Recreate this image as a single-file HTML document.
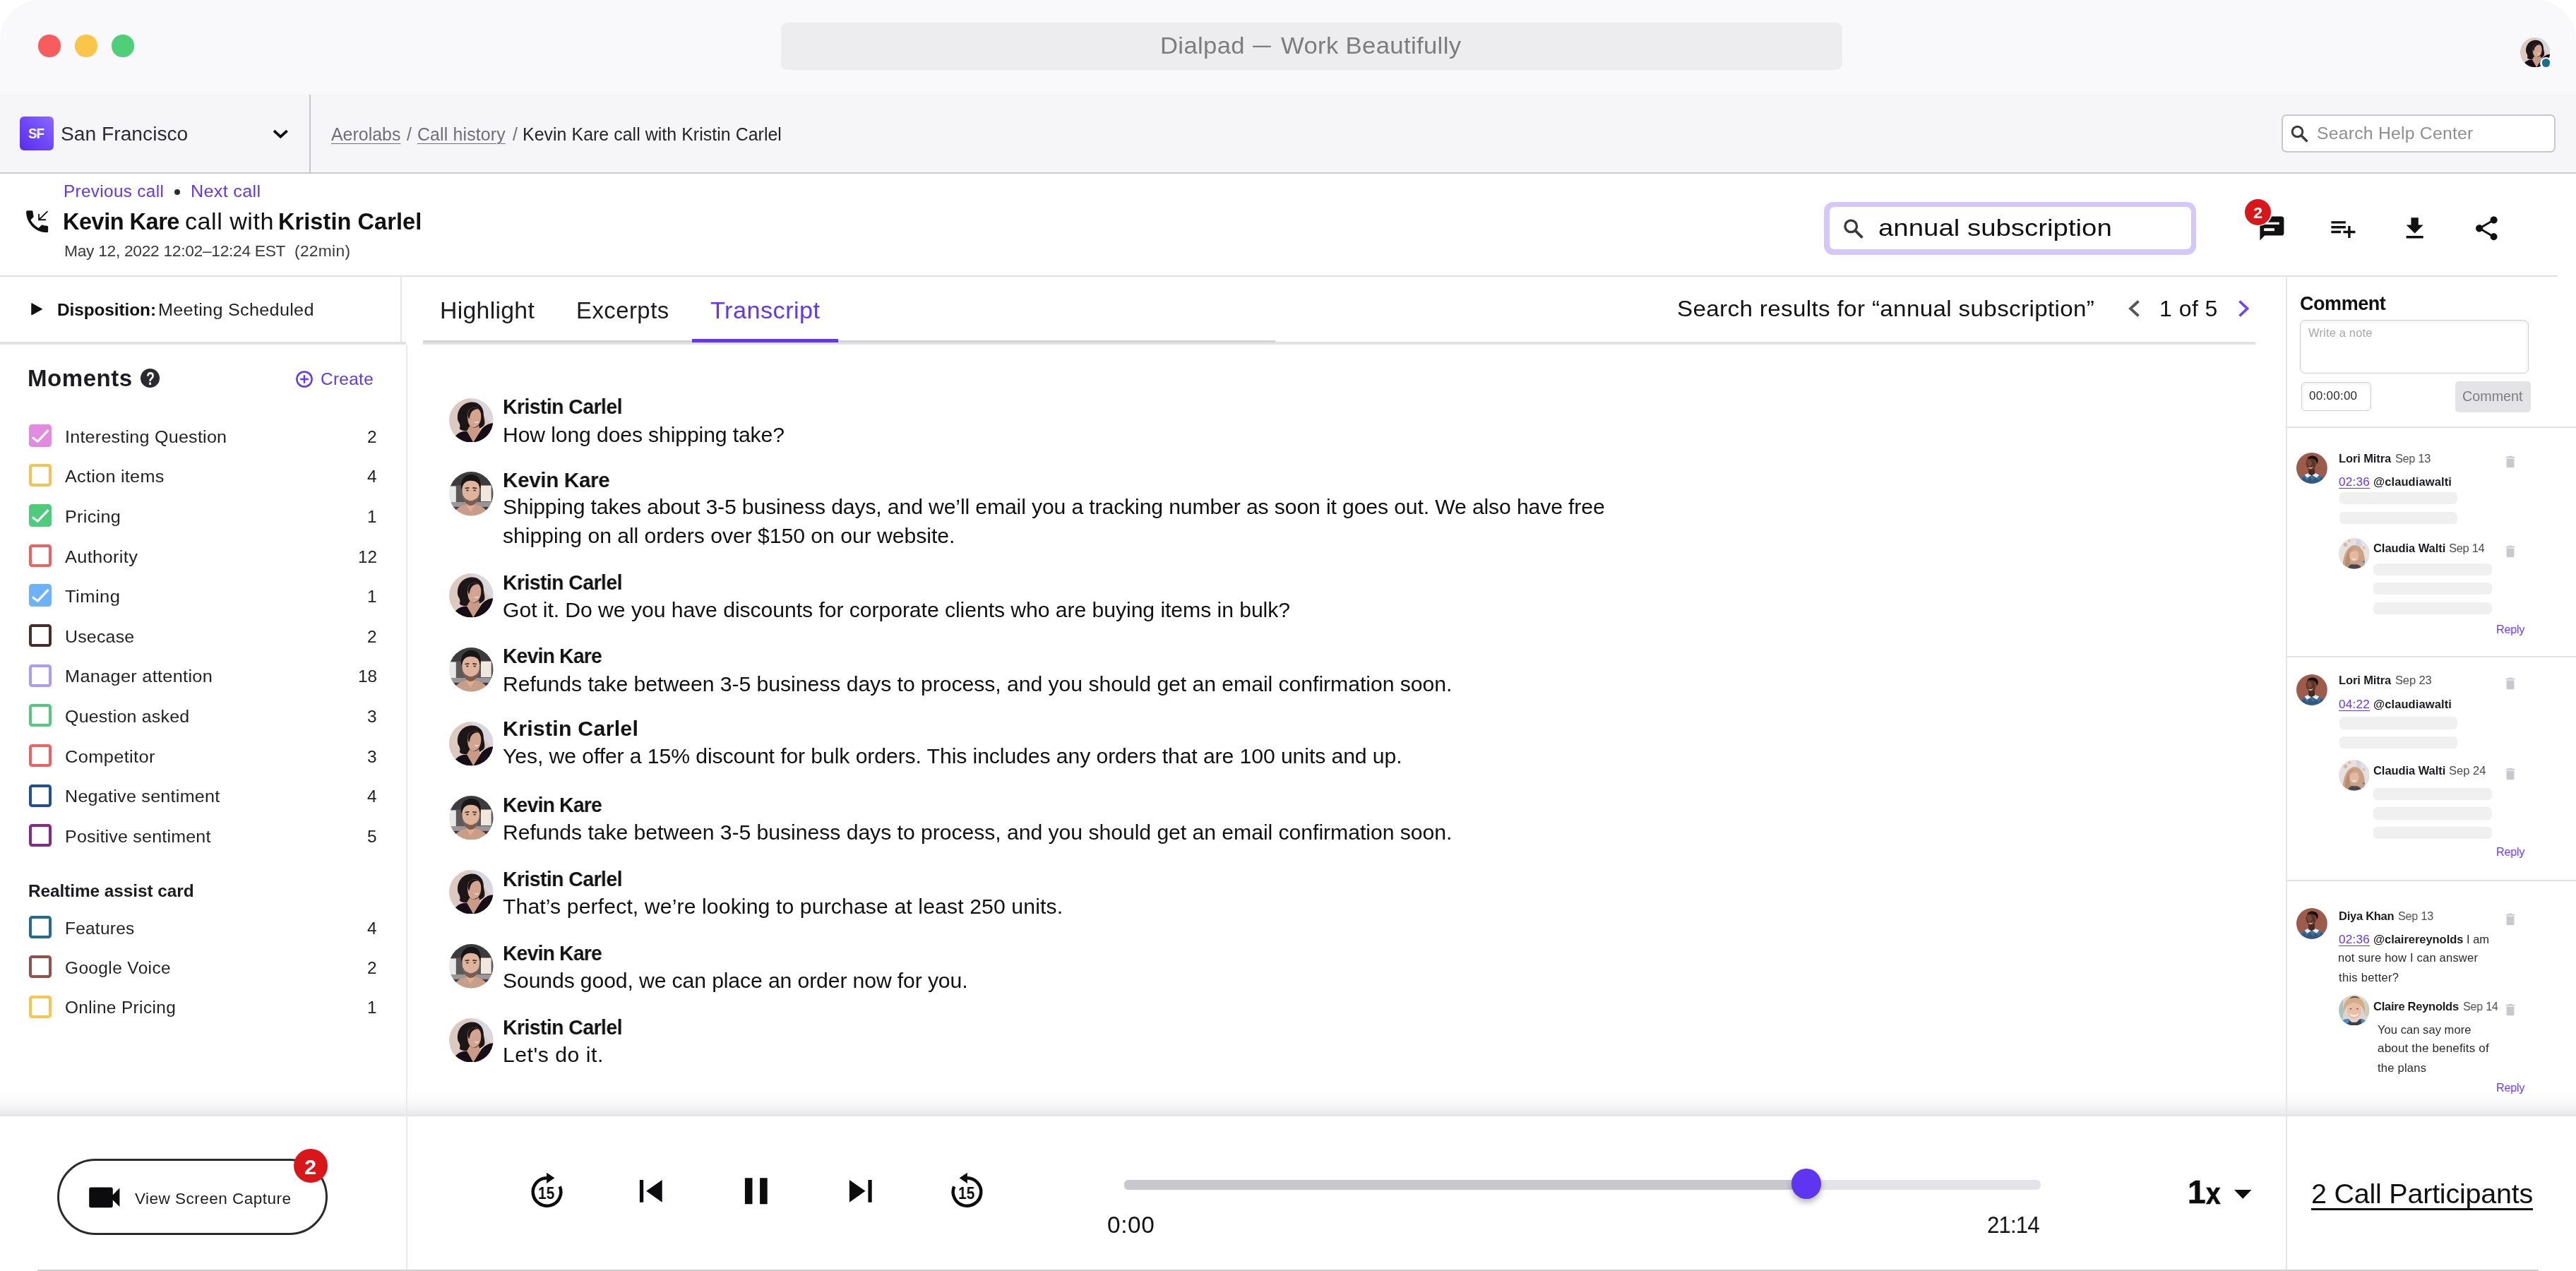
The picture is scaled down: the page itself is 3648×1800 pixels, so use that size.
<!DOCTYPE html>
<html lang="en"><head><meta charset="utf-8"><title>Dialpad — Work Beautifully</title>
<style>
html,body{margin:0;padding:0;background:#fff;width:3648px;height:1800px;}
body{font-family:"Liberation Sans",Arial,sans-serif;position:relative;}
#win{position:absolute;left:0;top:0;width:3648px;height:1800px;overflow:hidden;border-radius:56px;background:#fff;}
#win div,#win svg{position:absolute;}
.t{white-space:pre;will-change:transform;}

</style></head>
<body>
<div id="win">
<div style="left:0.0px;top:0.0px;width:3648.0px;height:134.0px;background:#f9f9fb;"></div>
<div style="left:54.4px;top:49.4px;width:31.2px;height:31.2px;background:#f95c5c;border-radius:50%;"></div>
<div style="left:106.4px;top:49.4px;width:31.2px;height:31.2px;background:#fbc549;border-radius:50%;"></div>
<div style="left:158.4px;top:49.4px;width:31.2px;height:31.2px;background:#50cf79;border-radius:50%;"></div>
<div style="left:1106.0px;top:31.6px;width:1503.0px;height:67.4px;background:#ededef;border-radius:9px;"></div>
<div class="t" style="left:1642.7px;top:43.9px;font-size:33.7px;line-height:40px;color:#7d7d80;letter-spacing:0.34px;transform:scaleX(1.0282);transform-origin:0 50%;">Dialpad</div>
<div class="t" style="left:1773.6px;top:42.1px;font-size:33.7px;line-height:40px;color:#7d7d80;transform:scaleX(0.7706);transform-origin:0 50%;">—</div>
<div class="t" style="left:1813.6px;top:43.9px;font-size:33.7px;line-height:40px;color:#7d7d80;letter-spacing:0.32px;transform:scaleX(1.0301);transform-origin:0 50%;">Work Beautifully</div>
<div style="left:0.0px;top:134.0px;width:3648.0px;height:110.0px;background:#f6f6f8;"></div>
<div style="left:0.0px;top:243.5px;width:3648.0px;height:2.5px;background:#c9c9ce;"></div>
<div style="left:438.4px;top:134.0px;width:1.7px;height:110.0px;background:#c6c6cb;"></div>
<div style="left:27.5px;top:164.8px;width:48.1px;height:48.2px;background:linear-gradient(45deg,#5a2cf0 0%,#6f48f7 50%,#8a6bfc 100%);border-radius:6px;"></div>
<div class="t" style="left:40.2px;top:177.4px;font-size:19.6px;line-height:24px;color:#fff;font-weight:700;letter-spacing:-0.87px;transform:scaleX(0.9505);transform-origin:0 50%;">SF</div>
<div class="t" style="left:86.1px;top:172.2px;font-size:28.2px;line-height:34px;color:#2c2c30;letter-spacing:0.01px;">San Francisco</div>
<svg style="left:383px;top:178px" width="28" height="24" viewBox="0 0 28 24"><path d="M5 7.2 L14.3 15.7 L23.6 7.2" fill="none" stroke="#111" stroke-width="3.8"/></svg>
<div class="t" style="left:468.5px;top:174.8px;font-size:24.9px;line-height:30px;color:#6f6f74;letter-spacing:0.02px;text-decoration:underline;text-decoration-thickness:1.3px;text-underline-offset:4px;">Aerolabs</div>
<div class="t" style="left:575.9px;top:174.8px;font-size:24.9px;line-height:30px;color:#6f6f74;">/</div>
<div class="t" style="left:591.2px;top:174.8px;font-size:24.9px;line-height:30px;color:#6f6f74;letter-spacing:0.14px;text-decoration:underline;text-decoration-thickness:1.3px;text-underline-offset:4px;">Call history</div>
<div class="t" style="left:725.9px;top:174.8px;font-size:24.9px;line-height:30px;color:#6f6f74;">/</div>
<div class="t" style="left:740.4px;top:174.8px;font-size:24.9px;line-height:30px;color:#232326;letter-spacing:0.05px;">Kevin Kare call with Kristin Carlel</div>
<div style="left:3231.2px;top:162.0px;width:387.6px;height:53.7px;background:#fff;border:2px solid #c8c8cc;border-radius:7px;box-sizing:border-box;"></div>
<svg style="left:3243px;top:176px" width="28" height="28" viewBox="0 0 28 28"><circle cx="10.5" cy="10.5" r="7.3" fill="none" stroke="#3a3a3e" stroke-width="3"/><path d="M16 16 L24.5 24.5" stroke="#3a3a3e" stroke-width="3.4"/></svg>
<div class="t" style="left:3280.7px;top:174.0px;font-size:24.8px;line-height:30px;color:#8e8e93;letter-spacing:0.21px;">Search Help Center</div>
<div class="t" style="left:89.6px;top:256.2px;font-size:24.3px;line-height:29px;color:#6236f5;letter-spacing:0.34px;">Previous call</div>
<div style="left:246.8px;top:268.0px;width:8.0px;height:8.0px;background:#2b2b2e;border-radius:50%;"></div>
<div class="t" style="left:270.1px;top:256.2px;font-size:24.3px;line-height:29px;color:#6236f5;letter-spacing:0.28px;transform:scaleX(1.0383);transform-origin:0 50%;">Next call</div>
<svg style="left:31.8px;top:292.8px" width="41.3" height="41.3" viewBox="0 0 24 24"><path fill="#111" d="M6.62 10.79c1.44 2.83 3.76 5.14 6.59 6.59l2.2-2.2c.27-.27.67-.36 1.02-.24 1.12.37 2.33.57 3.57.57.55 0 1 .45 1 1V20c0 .55-.45 1-1 1-9.390 0-17-7.610-17-17 0-.55.45-1 1-1h3.5c.55 0 1 .45 1 1 0 1.250.2 2.450.57 3.570.11.35.03.74-.25 1.020l-2.200 2.200z"/><path d="M20.6 3.6 L13.4 10.6 M13.4 5.8 V10.6 H19.2" fill="none" stroke="#111" stroke-width="1.05"/></svg>
<div class="t" style="left:88.5px;top:294.8px;font-size:32.5px;line-height:39px;color:#111;font-weight:700;letter-spacing:-0.49px;">Kevin Kare</div>
<div class="t" style="left:261.9px;top:294.8px;font-size:32.5px;line-height:39px;color:#111;letter-spacing:0.46px;transform:scaleX(1.0516);transform-origin:0 50%;">call with</div>
<div class="t" style="left:393.6px;top:294.8px;font-size:32.5px;line-height:39px;color:#111;font-weight:700;letter-spacing:0.07px;">Kristin Carlel</div>
<div class="t" style="left:90.6px;top:342.2px;font-size:22.8px;line-height:27px;color:#3c3838;letter-spacing:-0.31px;">May 12, 2022 12:02–12:24 EST</div>
<div class="t" style="left:417.3px;top:342.2px;font-size:22.8px;line-height:27px;color:#3c3838;letter-spacing:0.29px;">(22min)</div>
<div style="left:0.0px;top:390.0px;width:3622.0px;height:2.2px;background:#dfdfe4;"></div>
<div style="left:2583.0px;top:285.6px;width:527.0px;height:75.1px;background:#d5c6fc;border-radius:13px;"></div>
<div style="left:2590.5px;top:293.0px;width:512.5px;height:60.0px;background:#fff;border-radius:7px;"></div>
<svg style="left:2608px;top:307px" width="34" height="34" viewBox="0 0 34 34"><circle cx="13.2" cy="13.4" r="8.3" fill="none" stroke="#3a3a3e" stroke-width="3.3"/><path d="M19.4 19.6 L29.4 29.6" stroke="#3a3a3e" stroke-width="3.8"/></svg>
<div class="t" style="left:2660.4px;top:303.4px;font-size:32.8px;line-height:39px;color:#111;transform:scaleX(1.1706);transform-origin:0 50%;">annual subscription</div>
<svg style="left:3197.3px;top:302.6px" width="40.8" height="40.8" viewBox="0 0 24 24"><path fill="#111" d="M20 2H4c-1.100 0-2 .9-2 2v18l4-4h14c1.100 0 2-.9 2-2V4c0-1.100-.9-2-2-2z"/><rect x="5.4" y="6.9" width="12.7" height="1.9" fill="#fff"/><rect x="5.4" y="11.9" width="8.7" height="2.3" fill="#fff"/></svg>
<div style="left:3177.9px;top:280.6px;width:39.8px;height:39.8px;background:#fff;border-radius:50%;"></div>
<div style="left:3179.4px;top:282.1px;width:36.8px;height:36.8px;background:#d9161a;border-radius:50%;"></div>
<div class="t" style="left:3191.0px;top:288.5px;font-size:21.5px;line-height:26px;color:#fff;font-weight:700;transform:scaleX(1.1000);transform-origin:0 50%;">2</div>
<svg style="left:3298.4px;top:303px" width="40.8" height="40.8" viewBox="0 0 24 24"><path fill="#111" d="M14 10H2v2h12v-2zm0-4H2v2h12V6zm4 8v-4h-2v4h-4v2h4v4h2v-4h4v-2h-4zM2 16h8v-2H2v2z"/></svg>
<svg style="left:3399.4px;top:302.5px" width="41.3" height="41.3" viewBox="0 0 24 24"><path fill="#111" d="M19 9h-4V3H9v6H5l7 7 7-7zM5 18v2h14v-2H5z"/></svg>
<svg style="left:3500.9px;top:302.8px" width="40.8" height="40.8" viewBox="0 0 24 24"><path fill="#111" d="M18 16.080c-.76 0-1.440.3-1.960.77L8.910 12.700c.05-.23.09-.46.09-.7s-.04-.47-.09-.7l7.050-4.110c.54.5 1.250.81 2.040.81 1.660 0 3-1.340 3-3s-1.340-3-3-3-3 1.340-3 3c0 .24.04.47.09.7L8.040 9.810C7.500 9.310 6.790 9 6 9c-1.660 0-3 1.340-3 3s1.340 3 3 3c.79 0 1.500-.31 2.040-.81l7.120 4.160c-.05.21-.08.43-.08.65 0 1.610 1.310 2.920 2.920 2.920 1.610 0 2.920-1.310 2.920-2.920s-1.310-2.920-2.920-2.920z"/></svg>
<div style="left:566.5px;top:392.0px;width:2.1px;height:93.0px;background:#e4e4e9;"></div>
<svg style="left:44.4px;top:429.4px" width="16" height="17.6" viewBox="0 0 16 17.6"><path d="M0.8 0.6 L15.6 8.8 L0.8 17 Z" fill="#111" stroke="#111" stroke-width="1" stroke-linejoin="round"/></svg>
<div class="t" style="left:81.1px;top:424.2px;font-size:24.4px;line-height:29px;color:#111;font-weight:700;letter-spacing:-0.08px;">Disposition:</div>
<div class="t" style="left:223.5px;top:424.2px;font-size:24.4px;line-height:29px;color:#232326;letter-spacing:0.28px;transform:scaleX(1.0335);transform-origin:0 50%;">Meeting Scheduled</div>
<div style="left:0.0px;top:484.3px;width:575.0px;height:3.5px;background:#e1e1e6;"></div>
<div style="left:599.2px;top:484.0px;width:2594.4px;height:3.8px;background:#e1e1e6;"></div>
<div style="left:599.2px;top:482.0px;width:1206.8px;height:3.0px;background:#d3d3d8;"></div>
<div style="left:980.0px;top:480.0px;width:206.8px;height:4.6px;background:#6236f5;"></div>
<div class="t" style="left:623.4px;top:419.5px;font-size:32.9px;line-height:39px;color:#1c1b1f;letter-spacing:0.28px;transform:scaleX(1.0279);transform-origin:0 50%;">Highlight</div>
<div class="t" style="left:815.8px;top:419.5px;font-size:32.9px;line-height:39px;color:#1c1b1f;letter-spacing:0.46px;">Excerpts</div>
<div class="t" style="left:1006.4px;top:419.5px;font-size:32.9px;line-height:39px;color:#6236f5;letter-spacing:0.43px;transform:scaleX(1.0420);transform-origin:0 50%;">Transcript</div>
<div class="t" style="left:2375.4px;top:417.5px;font-size:32px;line-height:38px;color:#111;letter-spacing:0.34px;transform:scaleX(1.0367);transform-origin:0 50%;">Search results for “annual subscription”</div>
<svg style="left:3008px;top:420px" width="30" height="34" viewBox="0 0 30 34"><path d="M20.5 6.5 L9 17 L20.5 27.5" fill="none" stroke="#55555a" stroke-width="3.8"/></svg>
<div class="t" style="left:3058.4px;top:417.5px;font-size:32px;line-height:38px;color:#111;letter-spacing:0.47px;">1 of 5</div>
<svg style="left:3162px;top:420px" width="30" height="34" viewBox="0 0 30 34"><path d="M9.5 6.5 L20.5 17 L9.5 27.5" fill="none" stroke="#6d45f6" stroke-width="3.8"/></svg>
<div style="left:574.5px;top:488.0px;width:2.3px;height:1312.0px;background:#ebebee;"></div>
<div style="left:3236.9px;top:392.0px;width:2.1px;height:1408.0px;background:#e6e6ea;"></div>
<svg style="left:0;top:0" width="0" height="0"><defs><clipPath id="avc"><circle cx="32" cy="32" r="32"/></clipPath><filter id="bl" x="-10%" y="-10%" width="120%" height="120%"><feGaussianBlur stdDeviation="0.7"/></filter></defs></svg>
<svg style="left:3569.0px;top:52.9px" width="42.3" height="42.3" viewBox="0 0 64 64"><g clip-path="url(#avc)"><g filter="url(#bl)"><rect width="64" height="64" fill="#dcc9c1"/><path d="M30 0 H64 V40 C56 30 44 20 30 0 Z" fill="#d9d6dc"/><path d="M13 33 C10 22 16 8 30 6 C42 4 50 12 50 24 C51 32 53 36 50 40 C46 44 40 46 34 46 C26 48 18 48 15 44 C17 40 15 36 13 33 Z" fill="#1a1315"/><path d="M27 22 C28 14 38 11 43 16 C47 20 47 28 45 34 C43 40 38 43 33 42 C28 40 26 32 27 22 Z" fill="#d3a590"/><path d="M27 24 C28 14 36 11 43 16 C38 15 32 17 30 26 C29 32 28 30 27 24 Z" fill="#1a1315"/><path d="M36 33 C38 35 41 35 43 33 C42 37 38 37 36 33 Z" fill="#f3ebe6"/><path d="M30 40 C34 44 40 43 43 39 L45 48 L35 64 L24 50 Z" fill="#c99a86"/><path d="M8 56 C14 48 22 47 26 48 L35 64 L6 64 Z" fill="#121013"/><path d="M64 36 C56 36 48 42 45 48 L35 64 L64 64 Z" fill="#121013"/></g></g></svg>
<div style="left:3597.0px;top:81.0px;width:17.0px;height:17.0px;background:#f9f9fb;border-radius:50%;"></div>
<div style="left:3599.7px;top:83.4px;width:11.8px;height:11.8px;background:#1a6f8f;border-radius:50%;"></div>
<div class="t" style="left:39.3px;top:516.1px;font-size:33.1px;line-height:40px;color:#1c1b1f;font-weight:700;letter-spacing:0.49px;">Moments</div>
<div style="left:198.9px;top:522.2px;width:27.2px;height:26.9px;background:#2b2a2e;border-radius:50%;"></div>
<div class="t" style="left:206.5px;top:520.9px;font-size:25px;line-height:30px;color:#fff;font-weight:700;transform:scaleX(0.7846);transform-origin:0 50%;">?</div>
<svg style="left:417.9px;top:523.6px" width="26" height="26" viewBox="0 0 26 26"><circle cx="13" cy="13" r="10.6" fill="none" stroke="#6236f5" stroke-width="2.5"/><path d="M13 7.2 V18.8 M7.2 13 H18.8" stroke="#6236f5" stroke-width="2.5"/></svg>
<div class="t" style="left:453.8px;top:522.4px;font-size:24.4px;line-height:29px;color:#6236f5;letter-spacing:0.31px;">Create</div>
<div style="left:40.7px;top:600.7px;width:32.1px;height:32.1px;background:#e28be0;border-radius:4.5px;"><svg style="left:0;top:0" width="32" height="32" viewBox="0 0 32 32"><path d="M5 18.4 L12.4 24.2 L27.5 8.2" fill="none" stroke="#fff" stroke-width="3.2"/></svg></div>
<div class="t" style="left:92.1px;top:603.5px;font-size:24.4px;line-height:29px;color:#232326;letter-spacing:0.22px;transform:scaleX(1.0296);transform-origin:0 50%;">Interesting Question</div>
<div class="t" style="right:3114.0px;top:603.5px;font-size:24.4px;line-height:29px;color:#232326;">2</div>
<div style="left:40.7px;top:657.4px;width:32.1px;height:32.1px;border:4.1px solid #f9c14f;border-radius:4.5px;box-sizing:border-box;background:#fff;"></div>
<div class="t" style="left:92.2px;top:660.2px;font-size:24.4px;line-height:29px;color:#232326;letter-spacing:0.26px;transform:scaleX(1.0337);transform-origin:0 50%;">Action items</div>
<div class="t" style="right:3114.0px;top:660.2px;font-size:24.4px;line-height:29px;color:#232326;">4</div>
<div style="left:40.7px;top:714.0px;width:32.1px;height:32.1px;background:#4fcb7c;border-radius:4.5px;"><svg style="left:0;top:0" width="32" height="32" viewBox="0 0 32 32"><path d="M5 18.4 L12.4 24.2 L27.5 8.2" fill="none" stroke="#fff" stroke-width="3.2"/></svg></div>
<div class="t" style="left:92.1px;top:716.8px;font-size:24.4px;line-height:29px;color:#232326;letter-spacing:0.26px;transform:scaleX(1.0339);transform-origin:0 50%;">Pricing</div>
<div class="t" style="right:3114.0px;top:716.8px;font-size:24.4px;line-height:29px;color:#232326;">1</div>
<div style="left:40.7px;top:770.7px;width:32.1px;height:32.1px;border:4.1px solid #f25f5f;border-radius:4.5px;box-sizing:border-box;background:#fff;"></div>
<div class="t" style="left:92.2px;top:773.5px;font-size:24.4px;line-height:29px;color:#232326;letter-spacing:0.32px;transform:scaleX(1.0411);transform-origin:0 50%;">Authority</div>
<div class="t" style="right:3114.0px;top:773.5px;font-size:24.4px;line-height:29px;color:#232326;">12</div>
<div style="left:40.7px;top:827.3px;width:32.1px;height:32.1px;background:#6db3fb;border-radius:4.5px;"><svg style="left:0;top:0" width="32" height="32" viewBox="0 0 32 32"><path d="M5 18.4 L12.4 24.2 L27.5 8.2" fill="none" stroke="#fff" stroke-width="3.2"/></svg></div>
<div class="t" style="left:92.2px;top:830.1px;font-size:24.4px;line-height:29px;color:#232326;letter-spacing:0.43px;transform:scaleX(1.0474);transform-origin:0 50%;">Timing</div>
<div class="t" style="right:3114.0px;top:830.1px;font-size:24.4px;line-height:29px;color:#232326;">1</div>
<div style="left:40.7px;top:884.0px;width:32.1px;height:32.1px;border:4.1px solid #4a2c2c;border-radius:4.5px;box-sizing:border-box;background:#fff;"></div>
<div class="t" style="left:92.2px;top:886.8px;font-size:24.4px;line-height:29px;color:#232326;letter-spacing:0.21px;transform:scaleX(1.0210);transform-origin:0 50%;">Usecase</div>
<div class="t" style="right:3114.0px;top:886.8px;font-size:24.4px;line-height:29px;color:#232326;">2</div>
<div style="left:40.7px;top:940.6px;width:32.1px;height:32.1px;border:4.1px solid #a99bfb;border-radius:4.5px;box-sizing:border-box;background:#fff;"></div>
<div class="t" style="left:92.1px;top:943.4px;font-size:24.4px;line-height:29px;color:#232326;letter-spacing:0.29px;transform:scaleX(1.0375);transform-origin:0 50%;">Manager attention</div>
<div class="t" style="right:3114.0px;top:943.4px;font-size:24.4px;line-height:29px;color:#232326;">18</div>
<div style="left:40.7px;top:997.2px;width:32.1px;height:32.1px;border:4.1px solid #4fcb7c;border-radius:4.5px;box-sizing:border-box;background:#fff;"></div>
<div class="t" style="left:92.2px;top:1000.1px;font-size:24.4px;line-height:29px;color:#232326;letter-spacing:0.20px;transform:scaleX(1.0237);transform-origin:0 50%;">Question asked</div>
<div class="t" style="right:3114.0px;top:1000.1px;font-size:24.4px;line-height:29px;color:#232326;">3</div>
<div style="left:40.7px;top:1053.9px;width:32.1px;height:32.1px;border:4.1px solid #f25f5f;border-radius:4.5px;box-sizing:border-box;background:#fff;"></div>
<div class="t" style="left:92.2px;top:1056.7px;font-size:24.4px;line-height:29px;color:#232326;letter-spacing:0.35px;transform:scaleX(1.0413);transform-origin:0 50%;">Competitor</div>
<div class="t" style="right:3114.0px;top:1056.7px;font-size:24.4px;line-height:29px;color:#232326;">3</div>
<div style="left:40.7px;top:1110.5px;width:32.1px;height:32.1px;border:4.1px solid #1d4f9c;border-radius:4.5px;box-sizing:border-box;background:#fff;"></div>
<div class="t" style="left:92.1px;top:1113.4px;font-size:24.4px;line-height:29px;color:#232326;letter-spacing:0.24px;transform:scaleX(1.0298);transform-origin:0 50%;">Negative sentiment</div>
<div class="t" style="right:3114.0px;top:1113.4px;font-size:24.4px;line-height:29px;color:#232326;">4</div>
<div style="left:40.7px;top:1167.2px;width:32.1px;height:32.1px;border:4.1px solid #8a2688;border-radius:4.5px;box-sizing:border-box;background:#fff;"></div>
<div class="t" style="left:92.1px;top:1170.0px;font-size:24.4px;line-height:29px;color:#232326;letter-spacing:0.19px;transform:scaleX(1.0259);transform-origin:0 50%;">Positive sentiment</div>
<div class="t" style="right:3114.0px;top:1170.0px;font-size:24.4px;line-height:29px;color:#232326;">5</div>
<div class="t" style="left:40.3px;top:1247.3px;font-size:24.4px;line-height:29px;color:#1c1b1f;font-weight:700;letter-spacing:-0.07px;">Realtime assist card</div>
<div style="left:40.7px;top:1297.2px;width:32.1px;height:32.1px;border:4.1px solid #1f6d96;border-radius:4.5px;box-sizing:border-box;background:#fff;"></div>
<div class="t" style="left:92.2px;top:1299.5px;font-size:24.4px;line-height:29px;color:#232326;letter-spacing:0.28px;">Features</div>
<div class="t" style="right:3114.0px;top:1299.5px;font-size:24.4px;line-height:29px;color:#232326;">4</div>
<div style="left:40.7px;top:1353.3px;width:32.1px;height:32.1px;border:4.1px solid #9a4f46;border-radius:4.5px;box-sizing:border-box;background:#fff;"></div>
<div class="t" style="left:92.2px;top:1355.6px;font-size:24.4px;line-height:29px;color:#232326;letter-spacing:0.41px;">Google Voice</div>
<div class="t" style="right:3114.0px;top:1355.6px;font-size:24.4px;line-height:29px;color:#232326;">2</div>
<div style="left:40.7px;top:1409.9px;width:32.1px;height:32.1px;border:4.1px solid #f9c54f;border-radius:4.5px;box-sizing:border-box;background:#fff;"></div>
<div class="t" style="left:92.2px;top:1412.2px;font-size:24.4px;line-height:29px;color:#232326;letter-spacing:0.38px;">Online Pricing</div>
<div class="t" style="right:3114.0px;top:1412.2px;font-size:24.4px;line-height:29px;color:#232326;">1</div>
<svg style="left:636.3px;top:563.8px" width="62.6" height="62.6" viewBox="0 0 64 64"><g clip-path="url(#avc)"><g filter="url(#bl)"><rect width="64" height="64" fill="#dcc9c1"/><path d="M30 0 H64 V40 C56 30 44 20 30 0 Z" fill="#d9d6dc"/><path d="M13 33 C10 22 16 8 30 6 C42 4 50 12 50 24 C51 32 53 36 50 40 C46 44 40 46 34 46 C26 48 18 48 15 44 C17 40 15 36 13 33 Z" fill="#1a1315"/><path d="M27 22 C28 14 38 11 43 16 C47 20 47 28 45 34 C43 40 38 43 33 42 C28 40 26 32 27 22 Z" fill="#d3a590"/><path d="M27 24 C28 14 36 11 43 16 C38 15 32 17 30 26 C29 32 28 30 27 24 Z" fill="#1a1315"/><path d="M36 33 C38 35 41 35 43 33 C42 37 38 37 36 33 Z" fill="#f3ebe6"/><path d="M30 40 C34 44 40 43 43 39 L45 48 L35 64 L24 50 Z" fill="#c99a86"/><path d="M8 56 C14 48 22 47 26 48 L35 64 L6 64 Z" fill="#121013"/><path d="M64 36 C56 36 48 42 45 48 L35 64 L64 64 Z" fill="#121013"/></g></g></svg>
<div class="t" style="left:712.3px;top:557.4px;font-size:30.4px;line-height:36px;color:#111;font-weight:700;letter-spacing:-0.64px;transform:scaleX(0.9370);transform-origin:0 50%;">Kristin Carlel</div>
<div class="t" style="left:712.1px;top:597.7px;font-size:30.2px;line-height:36px;color:#111;letter-spacing:-0.14px;">How long does shipping take?</div>
<svg style="left:636.3px;top:668.3px" width="62.6" height="62.6" viewBox="0 0 64 64"><g clip-path="url(#avc)"><g filter="url(#bl)"><rect width="64" height="64" fill="#3d3b3c"/><rect x="0" y="20" width="64" height="26" fill="#5b5859"/><rect x="0" y="21" width="10" height="24" fill="#e9e8e9"/><rect x="46" y="20" width="15" height="23" fill="#f0e7df"/><rect x="0" y="44" width="64" height="7" fill="#9a9697"/><path d="M6 64 C8 52 20 47 32 47 C44 47 54 52 58 64 Z" fill="#c99e88"/><path d="M24 47 L31 58 L38 47 Z" fill="#dcae96"/><path d="M19 26 C19 14 25 11 31 11 C38 11 44 14 44 26 C44 38 39 48 31 48 C24 48 19 38 19 26 Z" fill="#e0b49c"/><path d="M20 33 C21 44 26 49 31 49 C37 49 42 44 43 33 C41 40 37 41 31 41 C26 41 22 40 20 33 Z" fill="#7b5b4c"/><path d="M27 40 C29 42 34 42 36 40 C35 43 28 43 27 40 Z" fill="#f1e6df"/><path d="M18 26 C15 12 23 4 32 4 C42 4 48 12 45 26 C44 17 40 13 31 13 C24 13 20 17 18 26 Z" fill="#191516"/><path d="M23 24 L29 23.4 M34 23.4 L40 24" stroke="#3a2a26" stroke-width="1.6" fill="none"/><ellipse cx="26.5" cy="27" rx="1.8" ry="1" fill="#3a2a26"/><ellipse cx="37" cy="27" rx="1.8" ry="1" fill="#3a2a26"/></g></g></svg>
<div class="t" style="left:712.3px;top:660.7px;font-size:30.4px;line-height:36px;color:#111;font-weight:700;letter-spacing:-0.32px;transform:scaleX(0.9728);transform-origin:0 50%;">Kevin Kare</div>
<div class="t" style="left:712.1px;top:700.1px;font-size:30.2px;line-height:36px;color:#111;letter-spacing:-0.14px;">Shipping takes about 3-5 business days, and we’ll email you a tracking number as soon it goes out. We also have free</div>
<div class="t" style="left:712.1px;top:740.7px;font-size:30.2px;line-height:36px;color:#111;letter-spacing:-0.05px;">shipping on all orders over $150 on our website.</div>
<svg style="left:636.3px;top:812.0px" width="62.6" height="62.6" viewBox="0 0 64 64"><g clip-path="url(#avc)"><g filter="url(#bl)"><rect width="64" height="64" fill="#dcc9c1"/><path d="M30 0 H64 V40 C56 30 44 20 30 0 Z" fill="#d9d6dc"/><path d="M13 33 C10 22 16 8 30 6 C42 4 50 12 50 24 C51 32 53 36 50 40 C46 44 40 46 34 46 C26 48 18 48 15 44 C17 40 15 36 13 33 Z" fill="#1a1315"/><path d="M27 22 C28 14 38 11 43 16 C47 20 47 28 45 34 C43 40 38 43 33 42 C28 40 26 32 27 22 Z" fill="#d3a590"/><path d="M27 24 C28 14 36 11 43 16 C38 15 32 17 30 26 C29 32 28 30 27 24 Z" fill="#1a1315"/><path d="M36 33 C38 35 41 35 43 33 C42 37 38 37 36 33 Z" fill="#f3ebe6"/><path d="M30 40 C34 44 40 43 43 39 L45 48 L35 64 L24 50 Z" fill="#c99a86"/><path d="M8 56 C14 48 22 47 26 48 L35 64 L6 64 Z" fill="#121013"/><path d="M64 36 C56 36 48 42 45 48 L35 64 L64 64 Z" fill="#121013"/></g></g></svg>
<div class="t" style="left:712.3px;top:805.9px;font-size:30.4px;line-height:36px;color:#111;font-weight:700;letter-spacing:-0.64px;transform:scaleX(0.9370);transform-origin:0 50%;">Kristin Carlel</div>
<div class="t" style="left:712.1px;top:845.7px;font-size:30.2px;line-height:36px;color:#111;letter-spacing:-0.07px;">Got it. Do we you have discounts for corporate clients who are buying items in bulk?</div>
<svg style="left:636.3px;top:917.2px" width="62.6" height="62.6" viewBox="0 0 64 64"><g clip-path="url(#avc)"><g filter="url(#bl)"><rect width="64" height="64" fill="#3d3b3c"/><rect x="0" y="20" width="64" height="26" fill="#5b5859"/><rect x="0" y="21" width="10" height="24" fill="#e9e8e9"/><rect x="46" y="20" width="15" height="23" fill="#f0e7df"/><rect x="0" y="44" width="64" height="7" fill="#9a9697"/><path d="M6 64 C8 52 20 47 32 47 C44 47 54 52 58 64 Z" fill="#c99e88"/><path d="M24 47 L31 58 L38 47 Z" fill="#dcae96"/><path d="M19 26 C19 14 25 11 31 11 C38 11 44 14 44 26 C44 38 39 48 31 48 C24 48 19 38 19 26 Z" fill="#e0b49c"/><path d="M20 33 C21 44 26 49 31 49 C37 49 42 44 43 33 C41 40 37 41 31 41 C26 41 22 40 20 33 Z" fill="#7b5b4c"/><path d="M27 40 C29 42 34 42 36 40 C35 43 28 43 27 40 Z" fill="#f1e6df"/><path d="M18 26 C15 12 23 4 32 4 C42 4 48 12 45 26 C44 17 40 13 31 13 C24 13 20 17 18 26 Z" fill="#191516"/><path d="M23 24 L29 23.4 M34 23.4 L40 24" stroke="#3a2a26" stroke-width="1.6" fill="none"/><ellipse cx="26.5" cy="27" rx="1.8" ry="1" fill="#3a2a26"/><ellipse cx="37" cy="27" rx="1.8" ry="1" fill="#3a2a26"/></g></g></svg>
<div class="t" style="left:712.3px;top:910.3px;font-size:30.4px;line-height:36px;color:#111;font-weight:700;letter-spacing:-0.85px;transform:scaleX(0.9312);transform-origin:0 50%;">Kevin Kare</div>
<div class="t" style="left:712.1px;top:950.7px;font-size:30.2px;line-height:36px;color:#111;letter-spacing:-0.05px;">Refunds take between 3-5 business days to process, and you should get an email confirmation soon.</div>
<svg style="left:636.3px;top:1022.0px" width="62.6" height="62.6" viewBox="0 0 64 64"><g clip-path="url(#avc)"><g filter="url(#bl)"><rect width="64" height="64" fill="#dcc9c1"/><path d="M30 0 H64 V40 C56 30 44 20 30 0 Z" fill="#d9d6dc"/><path d="M13 33 C10 22 16 8 30 6 C42 4 50 12 50 24 C51 32 53 36 50 40 C46 44 40 46 34 46 C26 48 18 48 15 44 C17 40 15 36 13 33 Z" fill="#1a1315"/><path d="M27 22 C28 14 38 11 43 16 C47 20 47 28 45 34 C43 40 38 43 33 42 C28 40 26 32 27 22 Z" fill="#d3a590"/><path d="M27 24 C28 14 36 11 43 16 C38 15 32 17 30 26 C29 32 28 30 27 24 Z" fill="#1a1315"/><path d="M36 33 C38 35 41 35 43 33 C42 37 38 37 36 33 Z" fill="#f3ebe6"/><path d="M30 40 C34 44 40 43 43 39 L45 48 L35 64 L24 50 Z" fill="#c99a86"/><path d="M8 56 C14 48 22 47 26 48 L35 64 L6 64 Z" fill="#121013"/><path d="M64 36 C56 36 48 42 45 48 L35 64 L64 64 Z" fill="#121013"/></g></g></svg>
<div class="t" style="left:712.2px;top:1012.9px;font-size:30.4px;line-height:36px;color:#111;font-weight:700;letter-spacing:0.21px;">Kristin Carlel</div>
<div class="t" style="left:712.1px;top:1053.3px;font-size:30.2px;line-height:36px;color:#111;letter-spacing:-0.10px;">Yes, we offer a 15% discount for bulk orders. This includes any orders that are 100 units and up.</div>
<svg style="left:636.3px;top:1126.8px" width="62.6" height="62.6" viewBox="0 0 64 64"><g clip-path="url(#avc)"><g filter="url(#bl)"><rect width="64" height="64" fill="#3d3b3c"/><rect x="0" y="20" width="64" height="26" fill="#5b5859"/><rect x="0" y="21" width="10" height="24" fill="#e9e8e9"/><rect x="46" y="20" width="15" height="23" fill="#f0e7df"/><rect x="0" y="44" width="64" height="7" fill="#9a9697"/><path d="M6 64 C8 52 20 47 32 47 C44 47 54 52 58 64 Z" fill="#c99e88"/><path d="M24 47 L31 58 L38 47 Z" fill="#dcae96"/><path d="M19 26 C19 14 25 11 31 11 C38 11 44 14 44 26 C44 38 39 48 31 48 C24 48 19 38 19 26 Z" fill="#e0b49c"/><path d="M20 33 C21 44 26 49 31 49 C37 49 42 44 43 33 C41 40 37 41 31 41 C26 41 22 40 20 33 Z" fill="#7b5b4c"/><path d="M27 40 C29 42 34 42 36 40 C35 43 28 43 27 40 Z" fill="#f1e6df"/><path d="M18 26 C15 12 23 4 32 4 C42 4 48 12 45 26 C44 17 40 13 31 13 C24 13 20 17 18 26 Z" fill="#191516"/><path d="M23 24 L29 23.4 M34 23.4 L40 24" stroke="#3a2a26" stroke-width="1.6" fill="none"/><ellipse cx="26.5" cy="27" rx="1.8" ry="1" fill="#3a2a26"/><ellipse cx="37" cy="27" rx="1.8" ry="1" fill="#3a2a26"/></g></g></svg>
<div class="t" style="left:712.3px;top:1120.5px;font-size:30.4px;line-height:36px;color:#111;font-weight:700;letter-spacing:-0.85px;transform:scaleX(0.9312);transform-origin:0 50%;">Kevin Kare</div>
<div class="t" style="left:712.1px;top:1160.5px;font-size:30.2px;line-height:36px;color:#111;letter-spacing:-0.05px;">Refunds take between 3-5 business days to process, and you should get an email confirmation soon.</div>
<svg style="left:636.3px;top:1231.6px" width="62.6" height="62.6" viewBox="0 0 64 64"><g clip-path="url(#avc)"><g filter="url(#bl)"><rect width="64" height="64" fill="#dcc9c1"/><path d="M30 0 H64 V40 C56 30 44 20 30 0 Z" fill="#d9d6dc"/><path d="M13 33 C10 22 16 8 30 6 C42 4 50 12 50 24 C51 32 53 36 50 40 C46 44 40 46 34 46 C26 48 18 48 15 44 C17 40 15 36 13 33 Z" fill="#1a1315"/><path d="M27 22 C28 14 38 11 43 16 C47 20 47 28 45 34 C43 40 38 43 33 42 C28 40 26 32 27 22 Z" fill="#d3a590"/><path d="M27 24 C28 14 36 11 43 16 C38 15 32 17 30 26 C29 32 28 30 27 24 Z" fill="#1a1315"/><path d="M36 33 C38 35 41 35 43 33 C42 37 38 37 36 33 Z" fill="#f3ebe6"/><path d="M30 40 C34 44 40 43 43 39 L45 48 L35 64 L24 50 Z" fill="#c99a86"/><path d="M8 56 C14 48 22 47 26 48 L35 64 L6 64 Z" fill="#121013"/><path d="M64 36 C56 36 48 42 45 48 L35 64 L64 64 Z" fill="#121013"/></g></g></svg>
<div class="t" style="left:712.3px;top:1225.9px;font-size:30.4px;line-height:36px;color:#111;font-weight:700;letter-spacing:-0.64px;transform:scaleX(0.9370);transform-origin:0 50%;">Kristin Carlel</div>
<div class="t" style="left:712.1px;top:1265.8px;font-size:30.2px;line-height:36px;color:#111;letter-spacing:0.11px;">That’s perfect, we’re looking to purchase at least 250 units.</div>
<svg style="left:636.3px;top:1337.0px" width="62.6" height="62.6" viewBox="0 0 64 64"><g clip-path="url(#avc)"><g filter="url(#bl)"><rect width="64" height="64" fill="#3d3b3c"/><rect x="0" y="20" width="64" height="26" fill="#5b5859"/><rect x="0" y="21" width="10" height="24" fill="#e9e8e9"/><rect x="46" y="20" width="15" height="23" fill="#f0e7df"/><rect x="0" y="44" width="64" height="7" fill="#9a9697"/><path d="M6 64 C8 52 20 47 32 47 C44 47 54 52 58 64 Z" fill="#c99e88"/><path d="M24 47 L31 58 L38 47 Z" fill="#dcae96"/><path d="M19 26 C19 14 25 11 31 11 C38 11 44 14 44 26 C44 38 39 48 31 48 C24 48 19 38 19 26 Z" fill="#e0b49c"/><path d="M20 33 C21 44 26 49 31 49 C37 49 42 44 43 33 C41 40 37 41 31 41 C26 41 22 40 20 33 Z" fill="#7b5b4c"/><path d="M27 40 C29 42 34 42 36 40 C35 43 28 43 27 40 Z" fill="#f1e6df"/><path d="M18 26 C15 12 23 4 32 4 C42 4 48 12 45 26 C44 17 40 13 31 13 C24 13 20 17 18 26 Z" fill="#191516"/><path d="M23 24 L29 23.4 M34 23.4 L40 24" stroke="#3a2a26" stroke-width="1.6" fill="none"/><ellipse cx="26.5" cy="27" rx="1.8" ry="1" fill="#3a2a26"/><ellipse cx="37" cy="27" rx="1.8" ry="1" fill="#3a2a26"/></g></g></svg>
<div class="t" style="left:712.3px;top:1330.8px;font-size:30.4px;line-height:36px;color:#111;font-weight:700;letter-spacing:-0.85px;transform:scaleX(0.9312);transform-origin:0 50%;">Kevin Kare</div>
<div class="t" style="left:712.1px;top:1370.9px;font-size:30.2px;line-height:36px;color:#111;letter-spacing:-0.13px;">Sounds good, we can place an order now for you.</div>
<svg style="left:636.3px;top:1441.7px" width="62.6" height="62.6" viewBox="0 0 64 64"><g clip-path="url(#avc)"><g filter="url(#bl)"><rect width="64" height="64" fill="#dcc9c1"/><path d="M30 0 H64 V40 C56 30 44 20 30 0 Z" fill="#d9d6dc"/><path d="M13 33 C10 22 16 8 30 6 C42 4 50 12 50 24 C51 32 53 36 50 40 C46 44 40 46 34 46 C26 48 18 48 15 44 C17 40 15 36 13 33 Z" fill="#1a1315"/><path d="M27 22 C28 14 38 11 43 16 C47 20 47 28 45 34 C43 40 38 43 33 42 C28 40 26 32 27 22 Z" fill="#d3a590"/><path d="M27 24 C28 14 36 11 43 16 C38 15 32 17 30 26 C29 32 28 30 27 24 Z" fill="#1a1315"/><path d="M36 33 C38 35 41 35 43 33 C42 37 38 37 36 33 Z" fill="#f3ebe6"/><path d="M30 40 C34 44 40 43 43 39 L45 48 L35 64 L24 50 Z" fill="#c99a86"/><path d="M8 56 C14 48 22 47 26 48 L35 64 L6 64 Z" fill="#121013"/><path d="M64 36 C56 36 48 42 45 48 L35 64 L64 64 Z" fill="#121013"/></g></g></svg>
<div class="t" style="left:712.3px;top:1435.9px;font-size:30.4px;line-height:36px;color:#111;font-weight:700;letter-spacing:-0.64px;transform:scaleX(0.9370);transform-origin:0 50%;">Kristin Carlel</div>
<div class="t" style="left:712.1px;top:1476.2px;font-size:30.2px;line-height:36px;color:#111;letter-spacing:0.51px;">Let&#x27;s do it.</div>
<div class="t" style="left:3257.2px;top:413.6px;font-size:27px;line-height:32px;color:#111;font-weight:700;letter-spacing:-0.45px;">Comment</div>
<div style="left:3257.2px;top:453.2px;width:323.8px;height:75.6px;background:#fff;border:1.6px solid #cdcdd4;border-radius:7px;box-sizing:border-box;box-shadow:inset 0 2px 4px rgba(0,0,0,.07);"></div>
<div class="t" style="left:3268.5px;top:461.2px;font-size:16.5px;line-height:20px;color:#a6a6ab;letter-spacing:0.16px;">Write a note</div>
<div style="left:3259.0px;top:540.8px;width:98.8px;height:41.7px;background:#fff;border:1.6px solid #cdcdd4;border-radius:6px;box-sizing:border-box;box-shadow:inset 0 2px 4px rgba(0,0,0,.07);"></div>
<div class="t" style="left:3270.4px;top:550.7px;font-size:17px;line-height:20px;color:#2b2b2e;letter-spacing:0.27px;">00:00:00</div>
<div style="left:3476.7px;top:540.0px;width:107.3px;height:44.0px;background:#e4e4e7;border-radius:5px;"></div>
<div class="t" style="left:3486.6px;top:549.1px;font-size:19.8px;line-height:24px;color:#7d7d82;letter-spacing:-0.04px;">Comment</div>
<div style="left:3239.0px;top:603.6px;width:409.0px;height:2.2px;background:#e1e1e6;"></div>
<svg style="left:3251.7px;top:640.7px" width="43.9" height="43.9" viewBox="0 0 64 64"><g clip-path="url(#avc)"><g filter="url(#bl)"><rect width="64" height="64" fill="#9d5c4b"/><path d="M2 64 C4 50 16 45 32 45 C48 45 60 50 62 64 Z" fill="#3f6f98"/><path d="M10 56 L16 50 L22 58 L28 50 L34 58 L40 50 L46 58 L52 50 L56 58 L56 64 L10 64 Z" fill="#2b4f73" opacity=".7"/><path d="M17 46 L31 39 L47 46 L42 52 L32 46 L22 52 Z" fill="#eeeeee"/><path d="M25 34 L38 34 L38 44 L31 47 L25 44 Z" fill="#4a2a20"/><ellipse cx="30" cy="23" rx="10" ry="13" fill="#5b3527" transform="rotate(-10 30 23)"/><ellipse cx="27" cy="21" rx="5" ry="7" fill="#7a4a38" transform="rotate(-10 27 21)"/><path d="M22 14 C24 5 38 4 43 11 C46 15 45 21 42 24 C42 16 36 11 28 12 C25 12 23 13 22 14 Z" fill="#120d0c"/><path d="M24 29 C27 32 32 32 35 28 C33 34 27 35 24 29 Z" fill="#f0e6e0"/></g></g></svg>
<div class="t" style="left:3311.5px;top:638.8px;font-size:16.5px;line-height:20px;color:#1c1b1f;font-weight:700;letter-spacing:-0.11px;">Lori Mitra</div>
<div class="t" style="left:3392.2px;top:638.8px;font-size:16.5px;line-height:20px;color:#4a4a4f;letter-spacing:-0.17px;transform:scaleX(0.9768);transform-origin:0 50%;">Sep 13</div>
<svg style="left:3544.4px;top:642.5px" width="22" height="22" viewBox="0 0 24 24"><path fill="#c8c8ce" d="M6 19c0 1.100.9 2 2 2h8c1.100 0 2-.9 2-2V7H6v12zM19 4h-3.500l-1-1h-5l-1 1H5v2h14V4z"/></svg>
<div class="t" style="left:3312.3px;top:672.4px;font-size:16.5px;line-height:20px;color:#6236f5;letter-spacing:0.25px;transform:scaleX(1.0377);transform-origin:0 50%;text-decoration:underline;text-decoration-thickness:1.3px;text-underline-offset:3px;">02:36</div>
<div class="t" style="left:3361.3px;top:672.4px;font-size:16.5px;line-height:20px;color:#1c1b1f;font-weight:700;letter-spacing:0.10px;">@claudiawalti</div>
<div style="left:3312.6px;top:697.3px;width:167.4px;height:17.2px;background:#f0f0f1;border-radius:6px;"></div>
<div style="left:3312.6px;top:725.0px;width:167.4px;height:17.2px;background:#f0f0f1;border-radius:6px;"></div>
<svg style="left:3311.7px;top:762.0px" width="43.7" height="43.7" viewBox="0 0 64 64"><g clip-path="url(#avc)"><g filter="url(#bl)"><rect width="64" height="64" fill="#e6e0df"/><rect x="36" y="0" width="10" height="30" fill="#d2d5dc"/><circle cx="14" cy="14" r="4" fill="#d5b9a8"/><circle cx="52" cy="20" r="3" fill="#d9c0b0"/><circle cx="22" cy="6" r="3" fill="#d9bfae"/><path d="M8 64 C8 44 14 18 31 15 C46 14 54 30 54 46 C55 54 52 60 50 64 Z" fill="#c9a184"/><path d="M14 60 C12 44 18 24 30 20 C24 30 22 46 24 62 Z" fill="#b78d70"/><ellipse cx="32" cy="36" rx="10" ry="12.5" fill="#e5b89f"/><path d="M21 33 C23 21 40 18 45 30 C38 25 30 25 21 33 Z" fill="#cfa888"/><path d="M26 41 C29 44 35 44 38 41 C36 47 28 47 26 41 Z" fill="#f6eeea"/><path d="M18 64 C22 54 28 53 32 55 C38 53 46 56 48 64 Z" fill="#47464d"/><circle cx="52" cy="49" r="2.5" fill="#4a90d9"/></g></g></svg>
<div class="t" style="left:3361.0px;top:766.3px;font-size:16.5px;line-height:20px;color:#1c1b1f;font-weight:700;letter-spacing:-0.06px;">Claudia Walti</div>
<div class="t" style="left:3468.3px;top:766.3px;font-size:16.5px;line-height:20px;color:#4a4a4f;letter-spacing:-0.32px;">Sep 14</div>
<svg style="left:3544.4px;top:770.2px" width="22" height="22" viewBox="0 0 24 24"><path fill="#c8c8ce" d="M6 19c0 1.100.9 2 2 2h8c1.100 0 2-.9 2-2V7H6v12zM19 4h-3.500l-1-1h-5l-1 1H5v2h14V4z"/></svg>
<div style="left:3361.0px;top:797.5px;width:167.8px;height:17.2px;background:#f0f0f1;border-radius:6px;"></div>
<div style="left:3361.0px;top:825.3px;width:167.8px;height:17.2px;background:#f0f0f1;border-radius:6px;"></div>
<div style="left:3361.0px;top:853.1px;width:167.8px;height:17.2px;background:#f0f0f1;border-radius:6px;"></div>
<div class="t" style="left:3534.6px;top:881.2px;font-size:16.5px;line-height:20px;color:#6236f5;letter-spacing:-0.19px;transform:scaleX(0.9738);transform-origin:0 50%;">Reply</div>
<div style="left:3239.0px;top:929.3px;width:409.0px;height:2.2px;background:#e1e1e6;"></div>
<svg style="left:3251.7px;top:955.2px" width="43.9" height="43.9" viewBox="0 0 64 64"><g clip-path="url(#avc)"><g filter="url(#bl)"><rect width="64" height="64" fill="#9d5c4b"/><path d="M2 64 C4 50 16 45 32 45 C48 45 60 50 62 64 Z" fill="#3f6f98"/><path d="M10 56 L16 50 L22 58 L28 50 L34 58 L40 50 L46 58 L52 50 L56 58 L56 64 L10 64 Z" fill="#2b4f73" opacity=".7"/><path d="M17 46 L31 39 L47 46 L42 52 L32 46 L22 52 Z" fill="#eeeeee"/><path d="M25 34 L38 34 L38 44 L31 47 L25 44 Z" fill="#4a2a20"/><ellipse cx="30" cy="23" rx="10" ry="13" fill="#5b3527" transform="rotate(-10 30 23)"/><ellipse cx="27" cy="21" rx="5" ry="7" fill="#7a4a38" transform="rotate(-10 27 21)"/><path d="M22 14 C24 5 38 4 43 11 C46 15 45 21 42 24 C42 16 36 11 28 12 C25 12 23 13 22 14 Z" fill="#120d0c"/><path d="M24 29 C27 32 32 32 35 28 C33 34 27 35 24 29 Z" fill="#f0e6e0"/></g></g></svg>
<div class="t" style="left:3311.5px;top:953.3px;font-size:16.5px;line-height:20px;color:#1c1b1f;font-weight:700;letter-spacing:-0.11px;">Lori Mitra</div>
<div class="t" style="left:3392.2px;top:953.3px;font-size:16.5px;line-height:20px;color:#4a4a4f;letter-spacing:-0.14px;">Sep 23</div>
<svg style="left:3544.4px;top:957.0px" width="22" height="22" viewBox="0 0 24 24"><path fill="#c8c8ce" d="M6 19c0 1.100.9 2 2 2h8c1.100 0 2-.9 2-2V7H6v12zM19 4h-3.500l-1-1h-5l-1 1H5v2h14V4z"/></svg>
<div class="t" style="left:3312.3px;top:986.9px;font-size:16.5px;line-height:20px;color:#6236f5;letter-spacing:0.25px;transform:scaleX(1.0377);transform-origin:0 50%;text-decoration:underline;text-decoration-thickness:1.3px;text-underline-offset:3px;">04:22</div>
<div class="t" style="left:3361.3px;top:986.9px;font-size:16.5px;line-height:20px;color:#1c1b1f;font-weight:700;letter-spacing:0.10px;">@claudiawalti</div>
<div style="left:3312.6px;top:1015.4px;width:167.4px;height:17.2px;background:#f0f0f1;border-radius:6px;"></div>
<div style="left:3312.6px;top:1043.3px;width:167.4px;height:17.2px;background:#f0f0f1;border-radius:6px;"></div>
<svg style="left:3311.7px;top:1076.4px" width="43.7" height="43.7" viewBox="0 0 64 64"><g clip-path="url(#avc)"><g filter="url(#bl)"><rect width="64" height="64" fill="#e6e0df"/><rect x="36" y="0" width="10" height="30" fill="#d2d5dc"/><circle cx="14" cy="14" r="4" fill="#d5b9a8"/><circle cx="52" cy="20" r="3" fill="#d9c0b0"/><circle cx="22" cy="6" r="3" fill="#d9bfae"/><path d="M8 64 C8 44 14 18 31 15 C46 14 54 30 54 46 C55 54 52 60 50 64 Z" fill="#c9a184"/><path d="M14 60 C12 44 18 24 30 20 C24 30 22 46 24 62 Z" fill="#b78d70"/><ellipse cx="32" cy="36" rx="10" ry="12.5" fill="#e5b89f"/><path d="M21 33 C23 21 40 18 45 30 C38 25 30 25 21 33 Z" fill="#cfa888"/><path d="M26 41 C29 44 35 44 38 41 C36 47 28 47 26 41 Z" fill="#f6eeea"/><path d="M18 64 C22 54 28 53 32 55 C38 53 46 56 48 64 Z" fill="#47464d"/><circle cx="52" cy="49" r="2.5" fill="#4a90d9"/></g></g></svg>
<div class="t" style="left:3361.0px;top:1080.7px;font-size:16.5px;line-height:20px;color:#1c1b1f;font-weight:700;letter-spacing:-0.06px;">Claudia Walti</div>
<div class="t" style="left:3468.3px;top:1080.7px;font-size:16.5px;line-height:20px;color:#4a4a4f;letter-spacing:0.02px;">Sep 24</div>
<svg style="left:3544.4px;top:1084.6px" width="22" height="22" viewBox="0 0 24 24"><path fill="#c8c8ce" d="M6 19c0 1.100.9 2 2 2h8c1.100 0 2-.9 2-2V7H6v12zM19 4h-3.500l-1-1h-5l-1 1H5v2h14V4z"/></svg>
<div style="left:3361.0px;top:1115.6px;width:167.8px;height:17.2px;background:#f0f0f1;border-radius:6px;"></div>
<div style="left:3361.0px;top:1143.4px;width:167.8px;height:17.2px;background:#f0f0f1;border-radius:6px;"></div>
<div style="left:3361.0px;top:1171.2px;width:167.8px;height:17.2px;background:#f0f0f1;border-radius:6px;"></div>
<div class="t" style="left:3534.6px;top:1196.2px;font-size:16.5px;line-height:20px;color:#6236f5;letter-spacing:-0.19px;transform:scaleX(0.9738);transform-origin:0 50%;">Reply</div>
<div style="left:3239.0px;top:1245.6px;width:409.0px;height:2.2px;background:#e1e1e6;"></div>
<svg style="left:3251.7px;top:1285.7px" width="43.9" height="43.9" viewBox="0 0 64 64"><g clip-path="url(#avc)"><g filter="url(#bl)"><rect width="64" height="64" fill="#9d5c4b"/><path d="M2 64 C4 50 16 45 32 45 C48 45 60 50 62 64 Z" fill="#3f6f98"/><path d="M10 56 L16 50 L22 58 L28 50 L34 58 L40 50 L46 58 L52 50 L56 58 L56 64 L10 64 Z" fill="#2b4f73" opacity=".7"/><path d="M17 46 L31 39 L47 46 L42 52 L32 46 L22 52 Z" fill="#eeeeee"/><path d="M25 34 L38 34 L38 44 L31 47 L25 44 Z" fill="#4a2a20"/><ellipse cx="30" cy="23" rx="10" ry="13" fill="#5b3527" transform="rotate(-10 30 23)"/><ellipse cx="27" cy="21" rx="5" ry="7" fill="#7a4a38" transform="rotate(-10 27 21)"/><path d="M22 14 C24 5 38 4 43 11 C46 15 45 21 42 24 C42 16 36 11 28 12 C25 12 23 13 22 14 Z" fill="#120d0c"/><path d="M24 29 C27 32 32 32 35 28 C33 34 27 35 24 29 Z" fill="#f0e6e0"/></g></g></svg>
<div class="t" style="left:3311.5px;top:1286.6px;font-size:16.5px;line-height:20px;color:#1c1b1f;font-weight:700;letter-spacing:-0.26px;">Diya Khan</div>
<div class="t" style="left:3395.8px;top:1286.6px;font-size:16.5px;line-height:20px;color:#4a4a4f;letter-spacing:-0.17px;transform:scaleX(0.9756);transform-origin:0 50%;">Sep 13</div>
<svg style="left:3544.4px;top:1290.5px" width="22" height="22" viewBox="0 0 24 24"><path fill="#c8c8ce" d="M6 19c0 1.100.9 2 2 2h8c1.100 0 2-.9 2-2V7H6v12zM19 4h-3.500l-1-1h-5l-1 1H5v2h14V4z"/></svg>
<div class="t" style="left:3312.3px;top:1320.1px;font-size:16.5px;line-height:20px;color:#6236f5;letter-spacing:0.25px;transform:scaleX(1.0377);transform-origin:0 50%;text-decoration:underline;text-decoration-thickness:1.3px;text-underline-offset:3px;">02:36</div>
<div class="t" style="left:3361.3px;top:1320.1px;font-size:16.5px;line-height:20px;color:#1c1b1f;font-weight:700;letter-spacing:-0.04px;">@clairereynolds</div>
<div class="t" style="left:3493.0px;top:1320.1px;font-size:16.5px;line-height:20px;color:#2a2a2e;letter-spacing:-0.01px;">I am</div>
<div class="t" style="left:3311.4px;top:1346.0px;font-size:16.5px;line-height:20px;color:#2a2a2e;letter-spacing:0.22px;">not sure how I can answer</div>
<div class="t" style="left:3312.4px;top:1373.9px;font-size:16.5px;line-height:20px;color:#2a2a2e;letter-spacing:0.31px;">this better?</div>
<svg style="left:3312.0px;top:1408.8px" width="43.5" height="43.5" viewBox="0 0 64 64"><g clip-path="url(#avc)"><g filter="url(#bl)"><rect width="64" height="64" fill="#ddd5cf"/><rect x="0" y="8" width="9" height="44" fill="#a9c3c0"/><rect x="55" y="14" width="9" height="30" fill="#c7cfc4"/><path d="M10 40 C6 16 20 3 33 4 C48 4 58 18 54 40 C50 24 44 18 32 18 C20 18 14 24 10 40 Z" fill="#d2ae86"/><path d="M22 8 C27 1 39 1 44 8 C38 5 28 5 22 8 Z" fill="#5a4e4a"/><ellipse cx="32" cy="33" rx="15" ry="17" fill="#ebbda5"/><path d="M22 38 C27 43 37 43 42 38 C40 48 24 48 22 38 Z" fill="#f8f2ee"/><ellipse cx="25" cy="29" rx="2" ry="1.2" fill="#5a4038"/><ellipse cx="39" cy="29" rx="2" ry="1.2" fill="#5a4038"/><path d="M2 64 C6 52 14 50 20 50 L27 57 L37 57 L44 50 C52 50 58 54 62 64 Z" fill="#3c3f47"/><path d="M6 58 C10 52 16 50 20 50 L22 56 L12 64 L4 64 Z" fill="#3f8fd6"/><path d="M46 52 C52 50 58 56 60 64 L48 64 Z" fill="#3f8fd6"/></g></g></svg>
<div class="t" style="left:3361.0px;top:1414.5px;font-size:16.5px;line-height:20px;color:#1c1b1f;font-weight:700;letter-spacing:-0.26px;">Claire Reynolds</div>
<div class="t" style="left:3487.6px;top:1414.5px;font-size:16.5px;line-height:20px;color:#4a4a4f;letter-spacing:-0.20px;transform:scaleX(0.9722);transform-origin:0 50%;">Sep 14</div>
<svg style="left:3544.4px;top:1418.6px" width="22" height="22" viewBox="0 0 24 24"><path fill="#c8c8ce" d="M6 19c0 1.100.9 2 2 2h8c1.100 0 2-.9 2-2V7H6v12zM19 4h-3.500l-1-1h-5l-1 1H5v2h14V4z"/></svg>
<div class="t" style="left:3367.3px;top:1448.2px;font-size:16.5px;line-height:20px;color:#2a2a2e;letter-spacing:0.06px;">You can say more</div>
<div class="t" style="left:3366.7px;top:1474.3px;font-size:16.5px;line-height:20px;color:#2a2a2e;letter-spacing:0.16px;transform:scaleX(1.0322);transform-origin:0 50%;">about the benefits of</div>
<div class="t" style="left:3366.7px;top:1502.4px;font-size:16.5px;line-height:20px;color:#2a2a2e;letter-spacing:0.24px;">the plans</div>
<div class="t" style="left:3534.6px;top:1530.1px;font-size:16.5px;line-height:20px;color:#6236f5;letter-spacing:-0.19px;transform:scaleX(0.9738);transform-origin:0 50%;">Reply</div>
<div style="left:0.0px;top:1547.0px;width:3648.0px;height:34.0px;background:linear-gradient(to bottom,rgba(255,255,255,0) 0%,rgba(244,244,246,.55) 45%,#ececef 85%,#e5e5e8 100%);"></div>
<div style="left:0.0px;top:1581.0px;width:3648.0px;height:219.0px;background:#fff;"></div>
<div style="left:574.5px;top:1540.0px;width:2.3px;height:260.0px;background:#ebebee;"></div>
<div style="left:3236.9px;top:1540.0px;width:2.1px;height:260.0px;background:#e6e6ea;"></div>
<div style="left:53.0px;top:1798.4px;width:3542.0px;height:1.6px;background:#cfcfd2;"></div>
<div style="left:81.3px;top:1641.0px;width:382.6px;height:108.4px;background:#fff;border:3.4px solid #2b2a2f;border-radius:60px;box-sizing:border-box;"></div>
<svg style="left:119.1px;top:1666.7px" width="57.6" height="57.6" viewBox="0 0 24 24"><path fill="#0c0c0e" d="M17 10.500V7c0-.55-.45-1-1-1H4c-.55 0-1 .45-1 1v10c0 .55.45 1 1 1h12c.55 0 1-.45 1-1v-3.500l4 4v-11l-4 4z"/></svg>
<div class="t" style="left:191.2px;top:1684.8px;font-size:21.2px;line-height:25px;color:#1c1b1f;letter-spacing:0.44px;transform:scaleX(1.0635);transform-origin:0 50%;">View Screen Capture</div>
<div style="left:415.8px;top:1626.8px;width:48.1px;height:48.0px;background:#d9161a;border-radius:50%;"></div>
<div class="t" style="left:431.2px;top:1634.8px;font-size:29.9px;line-height:36px;color:#fff;font-weight:700;transform:scaleX(1.0267);transform-origin:0 50%;">2</div>
<svg style="left:0;top:0;overflow:visible" width="1" height="1"><path d="M774.5 1668.2 A19.8 19.8 0 1 0 792.8 1680.4" fill="none" stroke="#0c0c0e" stroke-width="4.5"/><polygon points="774.1,1660.7 774.1,1675.9 785.4,1668.3" fill="#0c0c0e"/></svg>
<div class="t" style="left:762.1px;top:1675.9px;font-size:23.2px;line-height:28px;color:#0c0c0e;font-weight:700;transform:scaleX(0.8998);transform-origin:0 50%;">15</div>
<svg style="left:890.2px;top:1655.4px" width="63.6" height="63.6" viewBox="0 0 24 24"><path fill="#0c0c0e" d="M6 6h2v12H6zm3.500 6l8.500 6V6z"/></svg>
<svg style="left:1038.9px;top:1655.4px" width="63.6" height="63.6" viewBox="0 0 24 24"><path fill="#0c0c0e" d="M6 19h4V5H6v14zm8-14v14h4V5h-4z"/></svg>
<svg style="left:1187.3px;top:1655.4px" width="63.6" height="63.6" viewBox="0 0 24 24"><path fill="#0c0c0e" d="M6 18l8.500-6L6 6v12zM16 6v12h2V6h-2z"/></svg>
<svg style="left:0;top:0;overflow:visible" width="1" height="1"><path d="M1369.5 1668.2 A19.8 19.8 0 1 1 1351.2 1680.4" fill="none" stroke="#0c0c0e" stroke-width="4.5"/><polygon points="1369.9,1660.7 1369.9,1675.9 1358.6,1668.3" fill="#0c0c0e"/></svg>
<div class="t" style="left:1357.1px;top:1675.9px;font-size:23.2px;line-height:28px;color:#0c0c0e;font-weight:700;transform:scaleX(0.8998);transform-origin:0 50%;">15</div>
<div style="left:1591.8px;top:1671.3px;width:1298.2px;height:13.6px;background:#e4e4e8;border-radius:6px;"></div>
<div style="left:1591.8px;top:1671.3px;width:968.2px;height:13.6px;background:#c7c7cc;border-radius:6px 0 0 6px;"></div>
<div style="left:2536.6px;top:1655.0px;width:42.8px;height:42.9px;background:#6035f2;border-radius:50%;box-shadow:0 5px 8px rgba(0,0,0,.28);"></div>
<div class="t" style="left:1568.0px;top:1714.9px;font-size:33.4px;line-height:40px;color:#111;letter-spacing:0.59px;">0:00</div>
<div class="t" style="left:2814.0px;top:1714.9px;font-size:33.4px;line-height:40px;color:#111;letter-spacing:-0.95px;transform:scaleX(0.9350);transform-origin:0 50%;">21:14</div>
<div class="t" style="left:3098.4px;top:1661.0px;font-size:46px;line-height:55px;color:#0c0c0e;font-weight:700;-webkit-text-stroke:0.6px #0c0c0e;">1</div>
<div class="t" style="left:3123.5px;top:1663.5px;font-size:43px;line-height:52px;color:#0c0c0e;font-weight:700;transform:scaleX(0.8583);transform-origin:0 50%;-webkit-text-stroke:0.7px #0c0c0e;">x</div>
<svg style="left:3164px;top:1684.6px" width="24.4" height="13" viewBox="0 0 24.4 13"><path d="M0 0 H24.4 L12.2 12.8 Z" fill="#0c0c0e"/></svg>
<div class="t" style="left:3272.7px;top:1666.8px;font-size:39.5px;line-height:47px;color:#111;letter-spacing:-0.23px;text-decoration:underline;text-decoration-thickness:3px;text-underline-offset:7px;text-decoration-skip-ink:none;">2 Call Participants</div>
</div>
</body></html>
